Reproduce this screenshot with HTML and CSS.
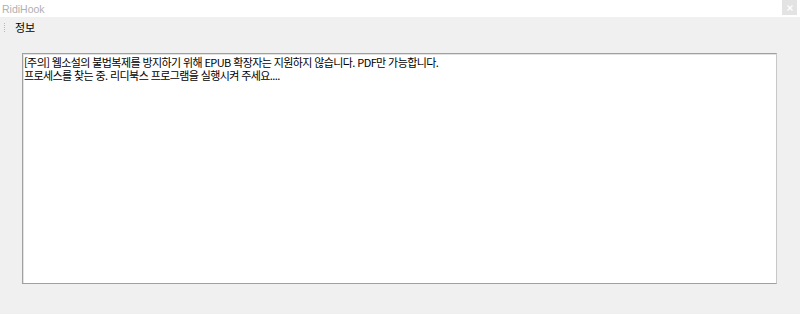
FILE: index.html
```html
<!DOCTYPE html>
<html lang="ko">
<head>
    <meta charset="UTF-8">
    <title>RidiHook</title>
    <link rel="stylesheet" href="styles.css">
</head>
<body>
    <div class="window">
        <div class="titlebar">
            <span class="title">RidiHook</span>
            <span class="close-btn">
                <svg width="6" height="6" viewBox="0 0 6 6"><path d="M0.5 0.5 L5.5 5.5 M5.5 0.5 L0.5 5.5" stroke="#fff" stroke-width="1.2"/></svg>
            </span>
        </div>
        <div class="menubar">
            <span class="grip"></span>
            <span class="menu-item">정보</span>
        </div>
        <div class="content">
            <div class="log-box">[주의] 웹소설의 불법복제를 방지하기 위해 EPUB 확장자는 지원하지 않습니다. PDF만 가능합니다.
프로세스를 찾는 중. 리디북스 프로그램을 실행시켜 주세요....</div>
        </div>
    </div>
</body>
</html>
```

FILE: styles.css
```css
body {
    margin: 0;
    font-family: "Noto Sans CJK KR", "DejaVu Sans", sans-serif;
    background-color: #f0f0f0;
}
.window {
    width: 800px;
    height: 314px;
    display: flex;
    flex-direction: column;
}
.titlebar {
    height: 17px;
    background-color: white;
    display: flex;
    align-items: center;
    justify-content: space-between;
}
.title {
    font-family: "Liberation Sans", sans-serif;
    font-size: 10.5px;
    color: #b0b0b0;
    padding-left: 2px;
}
.close-btn {
    width: 15px;
    height: 15px;
    margin-right: 3px;
    margin-top: -2px;
    background-color: #e3e3e3;
    display: flex;
    align-items: center;
    justify-content: center;
}
.menubar {
    height: 20px;
    display: flex;
    align-items: center;
}
.grip {
    width: 1px;
    height: 9px;
    margin-left: 4px;
    background-image: linear-gradient(#b8b8b8 50%, transparent 50%);
    background-size: 1px 2px;
}
.menu-item {
    font-size: 11px;
    color: #000;
    margin-left: 10px;
}
.content {
    padding: 16px 22px 0 22px;
}
.log-box {
    width: 751px;
    height: 225px;
    background-color: white;
    border-top: 1px solid #a0a0a0;
    border-left: 1px solid #a0a0a0;
    border-right: 1px solid #c8c8c8;
    border-bottom: 1px solid #a0a0a0;
    box-shadow: inset 1px 1px 0 #e3e3e3;
    padding: 2px 1px;
    font-size: 11px;
    line-height: 13px;
    color: #000;
    white-space: pre-wrap;
    letter-spacing: -0.6px;
}
```
